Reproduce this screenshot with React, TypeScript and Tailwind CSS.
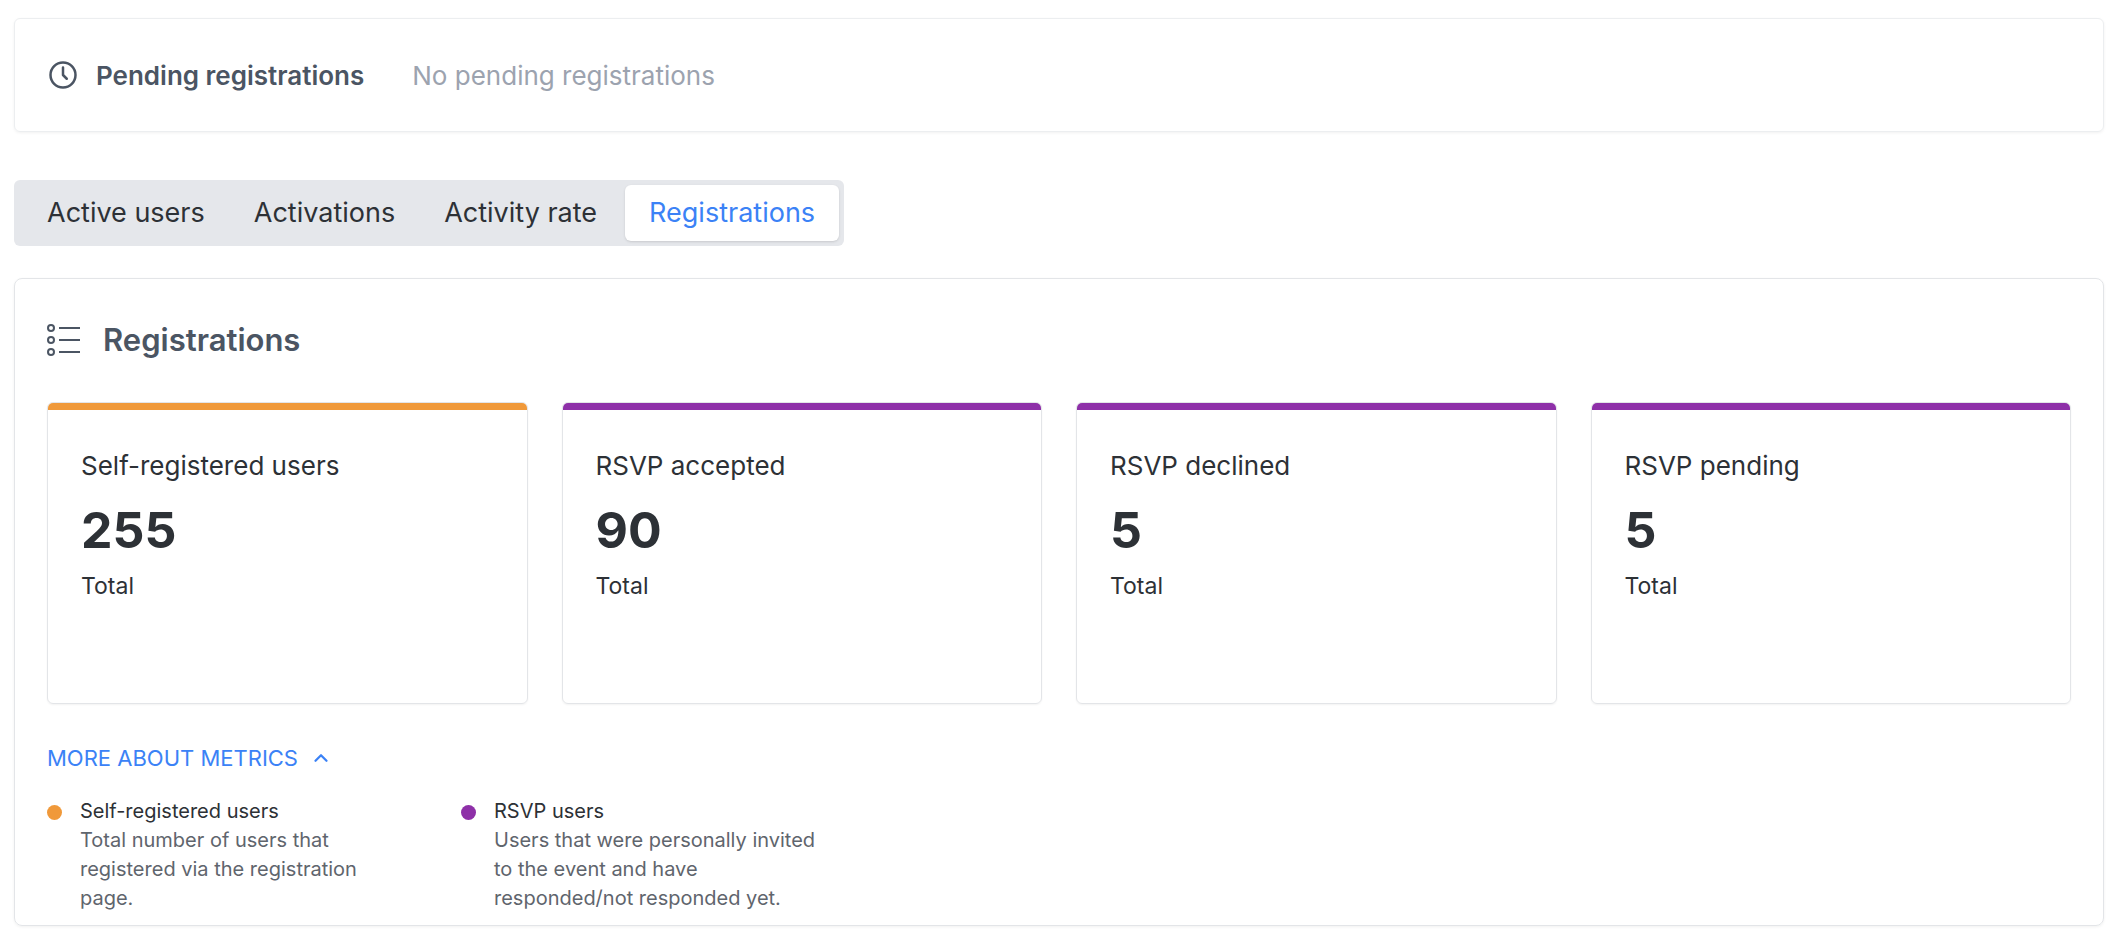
import React from "react";

const cards = [
  { t: "Self-registered users", n: "255", c: "bg-[#f0993a]" },
  { t: "RSVP accepted", n: "90", c: "bg-[#8e30a8]" },
  { t: "RSVP declined", n: "5", c: "bg-[#8e30a8]" },
  { t: "RSVP pending", n: "5", c: "bg-[#8e30a8]" },
];

export default function App() {
  return (
    <div className="w-[2118px] h-[936px] bg-white px-[14px] pt-[18px] text-[#2d3136]" style={{ fontFamily: "Inter, 'Noto Sans', sans-serif" }}>
      <div className="h-[114px] rounded-md border border-[#eceef0] shadow-[0_1px_3px_rgba(0,0,0,0.06)] flex items-center pl-[33px]">
        <svg width="30" height="30" viewBox="0 0 24 24" fill="none" stroke="#4b5563" strokeWidth="2" strokeLinecap="round" strokeLinejoin="round">
          <circle cx="12" cy="12" r="10" />
          <path d="M12 6v6l3 3" />
        </svg>
        <span className="ml-[18px] text-[26px] font-semibold text-[#4b5563]">Pending registrations</span>
        <span className="ml-[48px] text-[26px] text-[#9ca3af]">No pending registrations</span>
      </div>

      <div className="mt-[48px] inline-flex h-[66px] items-center rounded-md bg-[#e5e7eb] p-[5px] text-[27px]">
        <div className="px-[28px]">Active users</div>
        <div className="px-[21px]">Activations</div>
        <div className="px-[28px]">Activity rate</div>
        <div className="h-full flex items-center rounded-md bg-white px-[24px] text-[#3b82f6] shadow-sm">Registrations</div>
      </div>

      <div className="mt-[32px] h-[648px] rounded-lg border border-[#e3e5e8] shadow-[0_1px_3px_rgba(0,0,0,0.06)] px-[32px] pt-[38px]">
        <div className="flex items-center gap-[22px]">
          <svg width="34" height="32" viewBox="0 0 34 32" fill="none" stroke="#4b5563" strokeWidth="2">
            <circle cx="4" cy="4" r="3" />
            <circle cx="4" cy="16" r="3" />
            <circle cx="4" cy="28" r="3" />
            <path d="M12 4h21M12 16h21M12 28h21" />
          </svg>
          <span className="text-[31px] font-semibold text-[#4b5563]">Registrations</span>
        </div>

        <div className="mt-[38px] grid grid-cols-4 gap-[34px]">
          {cards.map((c) => (
            <div key={c.t} className="h-[302px] rounded-md border border-[#e3e5e8] overflow-hidden shadow-[0_1px_2px_rgba(0,0,0,0.05)]">
              <div className={`h-[7px] ${c.c}`} />
              <div className="px-[33px] pt-[36px]">
                <div className="text-[26px]">{c.t}</div>
                <div className="mt-[20px] text-[50px] font-bold leading-none">{c.n}</div>
                <div className="mt-[14px] text-[23px]">Total</div>
              </div>
            </div>
          ))}
        </div>

        <div className="mt-[38px] flex items-center gap-[12px] text-[22px] text-[#3b82f6]">
          <span>MORE ABOUT METRICS</span>
          <svg width="22" height="22" viewBox="0 0 24 24" fill="none" stroke="#3b82f6" strokeWidth="2.5" strokeLinecap="round" strokeLinejoin="round">
            <path d="M6 15l6-6 6 6" />
          </svg>
        </div>

        <div className="mt-[22px] flex text-[20px] leading-[29px]">
          <div className="flex w-[414px]">
            <span className="mt-[8px] h-[15px] w-[15px] rounded-full bg-[#f0993a]" />
            <div className="ml-[18px] w-[300px]">
              <div className="text-[#2d3136]">Self-registered users</div>
              <div className="text-[#5f656d]">Total number of users that registered via the registration page.</div>
            </div>
          </div>
          <div className="flex">
            <span className="mt-[8px] h-[15px] w-[15px] rounded-full bg-[#8e30a8]" />
            <div className="ml-[18px] w-[335px]">
              <div className="text-[#2d3136]">RSVP users</div>
              <div className="text-[#5f656d]">Users that were personally invited to the event and have responded/not responded yet.</div>
            </div>
          </div>
        </div>
      </div>
    </div>
  );
}
